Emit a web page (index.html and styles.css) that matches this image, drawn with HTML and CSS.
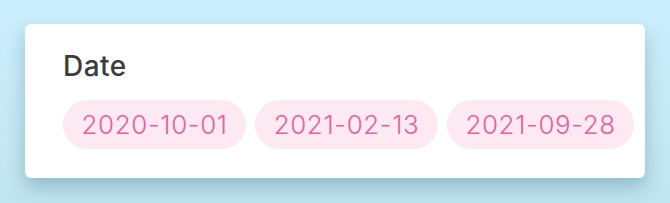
FILE: index.html
```html
<!DOCTYPE html>
<html lang="en">
<head>
  <meta charset="UTF-8" />
  <title>Date</title>
  <link rel="stylesheet" href="styles.css">
</head>
<body>
  <div class="card">
    <h2 class="card-title">Date</h2>
    <div class="chip-list">
      <span class="chip">2020-10-01</span>
      <span class="chip">2021-02-13</span>
      <span class="chip">2021-09-28</span>
    </div>
  </div>
</body>
</html>
```

FILE: styles.css
```css
html, body {
  height: 100%;
}
body {
  margin: 0;
  padding: 24px 25px 0;
  box-sizing: border-box;
  font-family: 'Inter', 'Noto Sans', sans-serif;
  background: linear-gradient(to bottom, #cbeffc, #c0e4f0);
}
.card {
  width: 620px;
  height: 154px;
  box-sizing: border-box;
  padding: 26px 10px 0 38px;
  background: #fff;
  border-radius: 6px;
  box-shadow: 0 9px 18px rgba(40, 90, 110, 0.3);
}
.card-title {
  margin: 0 0 16px;
  font-size: 28px;
  font-weight: 500;
  line-height: 1.2;
  letter-spacing: 0.5px;
  color: #3c3c3c;
}
.chip-list {
  display: flex;
  gap: 9px;
}
.chip {
  padding: 9px 18.5px;
  font-size: 26px;
  font-weight: 350;
  line-height: 1.2;
  letter-spacing: 0.6px;
  color: #e9609a;
  background: #fde9f2;
  border-radius: 25px;
  white-space: nowrap;
}
```
